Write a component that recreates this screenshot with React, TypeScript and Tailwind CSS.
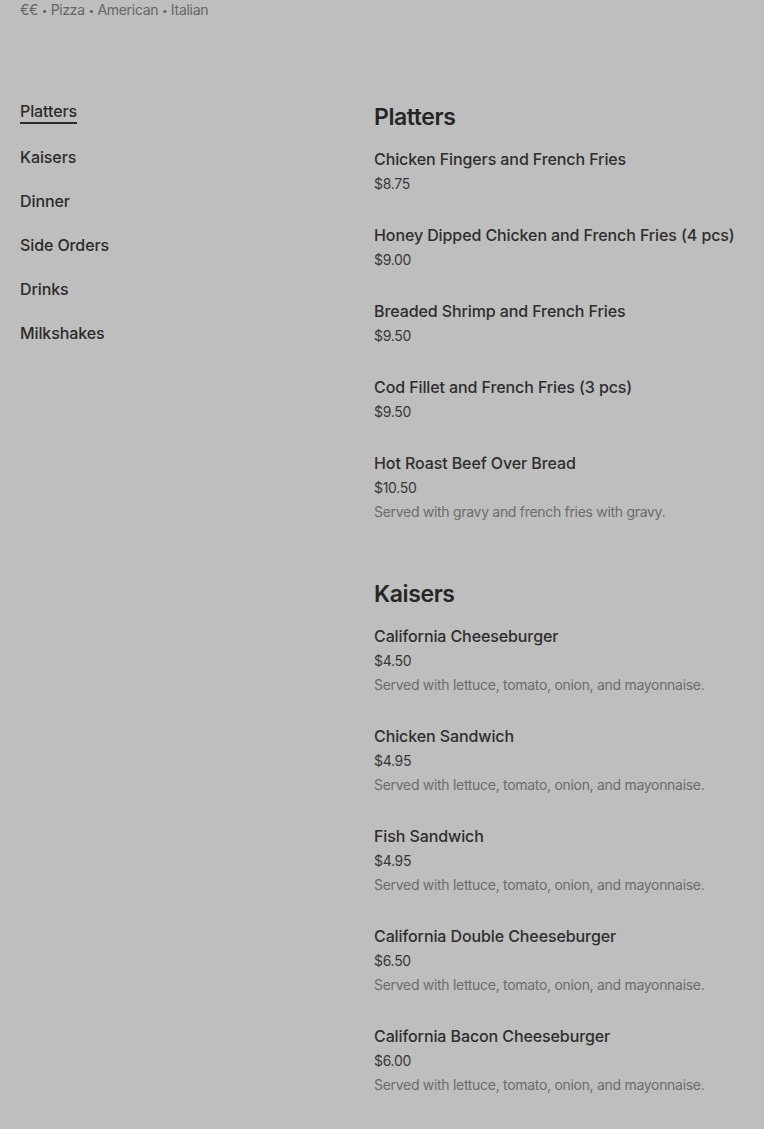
import React from "react";

type Item = { name: string; price: string; desc?: string };
type Section = { title: string; items: Item[] };

const LTOM = "Served with lettuce, tomato, onion, and mayonnaise.";

const sections: Section[] = [
  {
    title: "Platters",
    items: [
      { name: "Chicken Fingers and French Fries", price: "$8.75" },
      { name: "Honey Dipped Chicken and French Fries (4 pcs)", price: "$9.00" },
      { name: "Breaded Shrimp and French Fries", price: "$9.50" },
      { name: "Cod Fillet and French Fries (3 pcs)", price: "$9.50" },
      {
        name: "Hot Roast Beef Over Bread",
        price: "$10.50",
        desc: "Served with gravy and french fries with gravy.",
      },
    ],
  },
  {
    title: "Kaisers",
    items: [
      { name: "California Cheeseburger", price: "$4.50", desc: LTOM },
      { name: "Chicken Sandwich", price: "$4.95", desc: LTOM },
      { name: "Fish Sandwich", price: "$4.95", desc: LTOM },
      { name: "California Double Cheeseburger", price: "$6.50", desc: LTOM },
      { name: "California Bacon Cheeseburger", price: "$6.00", desc: LTOM },
      { name: "California Double Bacon Cheeseburger", price: "$7.50", desc: LTOM },
    ],
  },
];

const navLinks = ["Platters", "Kaisers", "Dinner", "Side Orders", "Drinks", "Milkshakes"];

const Dot = () => <span className="text-[10px] leading-none align-[1px]">•</span>;

export default function App() {
  return (
    <div
      className="min-h-screen bg-[#bebebe] px-5 text-[#2b2b2b]"
      style={{ fontFamily: "Inter, 'Noto Sans', sans-serif" }}
    >
      {/* Tags */}
      <div className="h-5 text-sm leading-5 tracking-[-0.3px] text-[#666666]">
        €€ <Dot /> Pizza <Dot /> American <Dot /> Italian
      </div>

      <div className="mt-[80px] flex">
        {/* Category nav */}
        <nav className="w-[354px] shrink-0">
          <ul className="flex flex-col gap-5">
            {navLinks.map((label, i) => (
              <li key={label} className={`flex ${i === 0 ? "mb-0.5" : ""}`}>
                <span
                  className={`block text-base font-medium leading-[22px] tracking-[-0.1px] border-b-2 ${
                    i === 0 ? "border-[#2b2b2b]" : "border-transparent"
                  }`}
                >
                  {label}
                </span>
              </li>
            ))}
          </ul>
        </nav>

        {/* Menu sections */}
        <div className="flex-1 flex flex-col gap-[55px] pb-10">
          {sections.map((s) => (
            <section key={s.title}>
              <h2 className="mt-[1px] text-[23px] font-semibold leading-8 tracking-[-0.4px] text-[#262626]">
                {s.title}
              </h2>
              <div className="mt-[14px] flex flex-col gap-[29px]">
                {s.items.map((it) => (
                  <div key={it.name}>
                    <div className="text-base font-medium leading-6 tracking-[-0.1px] text-[#2e2e2e]">
                      {it.name}
                    </div>
                    <div className="mt-[3px] text-sm leading-5 tracking-[-0.3px] text-[#383838]">
                      {it.price}
                    </div>
                    {it.desc && (
                      <div className="mt-1 text-sm leading-5 tracking-[-0.3px] text-[#6c6c6c]">
                        {it.desc}
                      </div>
                    )}
                  </div>
                ))}
              </div>
            </section>
          ))}
        </div>
      </div>
    </div>
  );
}
